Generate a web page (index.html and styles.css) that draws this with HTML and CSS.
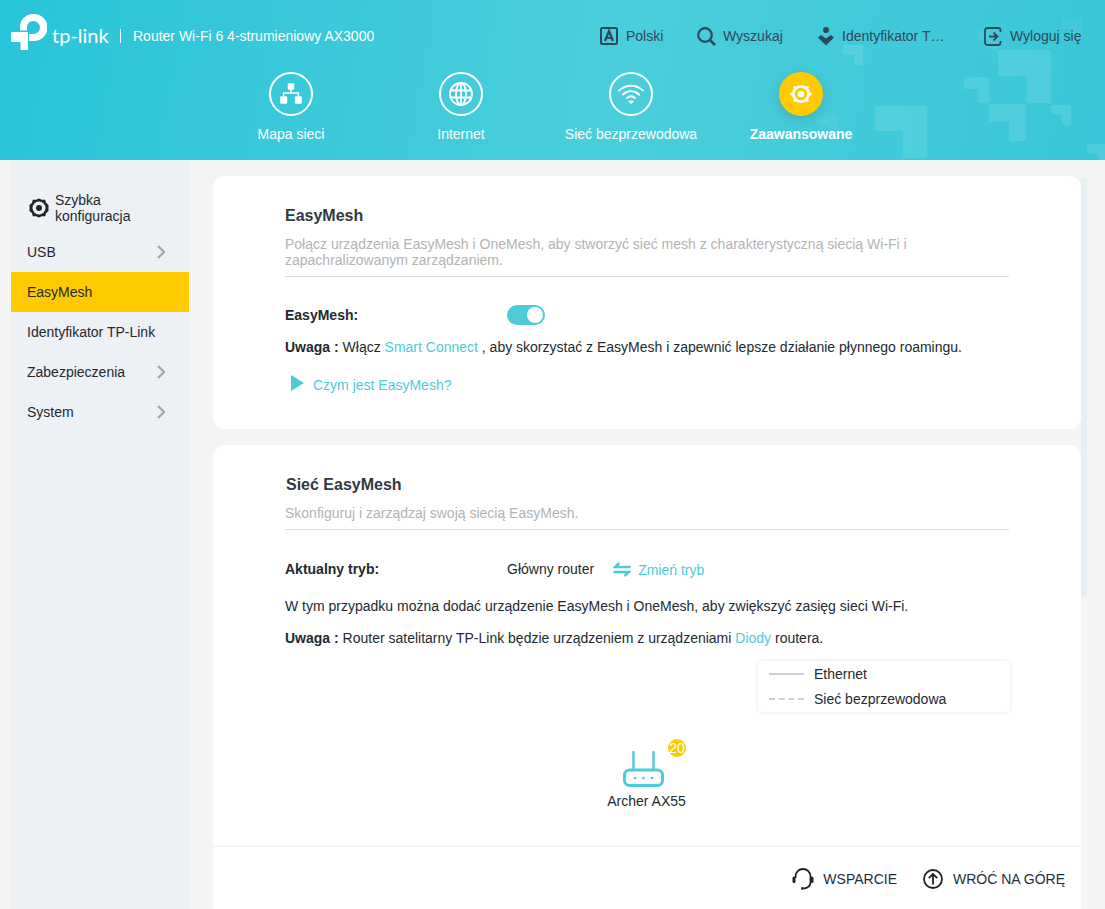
FILE: index.html
```html
<!DOCTYPE html>
<html lang="pl">
<head>
<meta charset="utf-8">
<title>Router Wi-Fi 6 AX3000</title>
<link rel="stylesheet" href="styles.css">
</head>
<body>
<header class="header">
  <svg class="deco" width="1105" height="160" viewBox="0 0 1105 160" aria-hidden="true">
    <path d="M875 106H927V158H903V131H875Z"/>
    <path d="M998 50H1051V103H1027V76H998Z"/>
    <path d="M989 104H1026V141H1009V122H989Z"/>
    <path d="M964 77H989V103H978V89H964Z"/>
    <path d="M843 45H863V65H854V55H843Z"/>
    <path class="faint" d="M1062 19H1082V39H1073V29H1062Z"/>
    <path d="M1051 105H1071V125H1062V114H1051Z"/>
    <path class="faint" d="M817 115H837V135H828V125H817Z"/>
    <path d="M1087 144H1107V164H1098V154H1087Z"/>
    <path class="faint" d="M978 30H998V50H989V40H978Z"/>
  </svg>
  <div class="topbar">
    <div class="brand">
      <svg class="logo-mark" width="36" height="36" viewBox="0 0 36 36" aria-hidden="true">
        <path fill="#fff" d="M9 16.500V13A13 13 0 0 1 22 0H23A13.500 13.500 0 0 1 23 27H18V20H22.500A6.500 6.500 0 0 0 22.500 7H22A6 6 0 0 0 16 13V16.500Z"/>
        <path fill="#fff" d="M0 18H17V36H9.500V28H0Z"/>
      </svg>
      <span class="logo-word">tp-link</span>
      <span class="brand-sep"></span>
      <span class="brand-title">Router Wi-Fi 6 4-strumieniowy AX3000</span>
    </div>
    <nav class="tools">
      <a class="tool tool-lang">
        <svg width="18" height="18" viewBox="0 0 18 18" fill="none" stroke="#2f4858" stroke-width="2" aria-hidden="true"><rect x="1" y="1" width="16" height="16" rx="1.500"/><path d="M5 14L9 4L13 14M6.300 11H11.700" stroke-width="2.200"/></svg>
        <span>Polski</span>
      </a>
      <a class="tool tool-search">
        <svg width="19" height="19" viewBox="0 0 19 19" fill="none" stroke="#2f4858" aria-hidden="true"><circle cx="8" cy="8" r="6.800" stroke-width="2.200"/><path d="M13 13L18 18" stroke-width="2.600"/></svg>
        <span>Wyszukaj</span>
      </a>
      <a class="tool tool-id">
        <svg width="16" height="19" viewBox="0 0 16 19" fill="#2f4858" aria-hidden="true"><circle cx="8" cy="3" r="3"/><path d="M0 10.500L3 8L8 11.500L13 8L16 10.500L8 18.500Z"/></svg>
        <span>Identyfikator T…</span>
      </a>
      <a class="tool tool-out">
        <svg width="18" height="19" viewBox="0 0 18 19" fill="none" stroke="#2f4858" stroke-width="1.800" aria-hidden="true"><path d="M16.500 5V3.500A2.500 2.500 0 0 0 14 1H3.500A2.500 2.500 0 0 0 1 3.500V15.500A2.500 2.500 0 0 0 3.500 18H14A2.500 2.500 0 0 0 16.500 15.500V14"/><path d="M5 9.500H13M9.500 5.500L13.500 9.500L9.500 13.500"/></svg>
        <span>Wyloguj się</span>
      </a>
    </nav>
  </div>
  <nav class="mainnav">
    <a class="navitem">
      <span class="navicon">
        <svg width="26" height="26" viewBox="0 0 24 24" fill="#fff" aria-hidden="true"><rect x="9" y="2" width="6" height="6" rx="1"/><rect x="2" y="14" width="6.500" height="7" rx="1"/><rect x="15.500" y="14" width="6.500" height="7" rx="1"/><path d="M11.300 7H12.700V10.300H19.500V14H18.100V11.700H5.900V14H4.500V10.300H11.300Z"/></svg>
      </span>
      <span class="navlabel">Mapa sieci</span>
    </a>
    <a class="navitem">
      <span class="navicon">
        <svg width="26" height="26" viewBox="0 0 26 26" fill="none" stroke="#fff" stroke-width="1.800" aria-hidden="true"><circle cx="13" cy="13" r="11"/><ellipse cx="13" cy="13" rx="5" ry="11"/><path d="M2.500 9.500H23.500M2.500 16.500H23.500M13 2V24"/></svg>
      </span>
      <span class="navlabel">Internet</span>
    </a>
    <a class="navitem">
      <span class="navicon">
        <svg width="28" height="24" viewBox="0 0 28 24" fill="none" stroke="#fff" stroke-width="2" stroke-linecap="round" aria-hidden="true"><path d="M2 8.500C9 2 19 2 26 8.500"/><path d="M6 12.500C11 8 17 8 22 12.500"/><path d="M10 16C12.500 14 15.500 14 18 16"/><path d="M14 21.500L11.800 19.200H16.200Z" fill="#fff" stroke-width="1"/></svg>
      </span>
      <span class="navlabel">Sieć bezprzewodowa</span>
    </a>
    <a class="navitem navitem-active">
      <span class="navicon">
        <svg width="24" height="24" viewBox="0 0 24 24" aria-hidden="true"><circle cx="12" cy="12" r="7.600" fill="none" stroke="#fff" stroke-width="2.600"/><circle cx="12" cy="12" r="3.300" fill="#fff"/><circle cx="5.800" cy="5.500" r="1.600" fill="#fff"/><circle cx="18.200" cy="5.500" r="1.600" fill="#fff"/><circle cx="5.800" cy="18.500" r="1.600" fill="#fff"/><circle cx="18.200" cy="18.500" r="1.600" fill="#fff"/><circle cx="2.800" cy="12" r="1.600" fill="#fff"/><circle cx="21.200" cy="12" r="1.600" fill="#fff"/></svg>
      </span>
      <span class="navlabel">Zaawansowane</span>
    </a>
  </nav>
</header>

<div class="body-wrap">
  <aside class="sidebar">
    <a class="quick">
      <svg width="20" height="20" viewBox="0 0 20 20" aria-hidden="true"><path d="M10 0.500L13 1.800L16.200 1.800L17 4.700L19.500 7L19.500 13L17 15.300L16.200 18.200L13 18.200L10 19.500L7 18.200L3.800 18.200L3 15.300L0.500 13L0.500 7L3 4.700L3.800 1.800L7 1.800Z" fill="#22262b"/><circle cx="10" cy="10" r="6.500" fill="#edf0f5"/><circle cx="10" cy="10" r="3" fill="#22262b"/></svg>
      <span>Szybka<br>konfiguracja</span>
    </a>
    <a class="side-item">USB<svg class="chev" width="8" height="14" viewBox="0 0 8 14" fill="none" stroke="#a4a9b0" stroke-width="2.400" aria-hidden="true"><path d="M1 1L7 7L1 13"/></svg></a>
    <a class="side-item side-active">EasyMesh</a>
    <a class="side-item">Identyfikator TP-Link</a>
    <a class="side-item">Zabezpieczenia<svg class="chev" width="8" height="14" viewBox="0 0 8 14" fill="none" stroke="#a4a9b0" stroke-width="2.400" aria-hidden="true"><path d="M1 1L7 7L1 13"/></svg></a>
    <a class="side-item">System<svg class="chev" width="8" height="14" viewBox="0 0 8 14" fill="none" stroke="#a4a9b0" stroke-width="2.400" aria-hidden="true"><path d="M1 1L7 7L1 13"/></svg></a>
  </aside>

  <main class="main">
    <div class="scroll-thumb"></div>
    <section class="card card-first">
      <h2 class="card-title">EasyMesh</h2>
      <p class="card-desc">Połącz urządzenia EasyMesh i OneMesh, aby stworzyć sieć mesh z charakterystyczną siecią Wi-Fi i zapachralizowanym zarządzaniem.</p>
      <div class="row row-toggle">
        <span class="row-label">EasyMesh:</span>
        <span class="toggle"><span class="knob"></span></span>
      </div>
      <p class="note note-a"><b>Uwaga :</b> Włącz <a class="link">Smart Connect</a> , aby skorzystać z EasyMesh i zapewnić lepsze działanie płynnego roamingu.</p>
      <a class="video link">
        <svg width="14" height="16" viewBox="0 0 14 16" aria-hidden="true"><path d="M1 0L14 8L1 16Z" fill="#4dcbd9"/></svg>
        <span>Czym jest EasyMesh?</span>
      </a>
    </section>

    <section class="card card-second">
      <h2 class="card-title card-title-2">Sieć EasyMesh</h2>
      <p class="card-desc">Skonfiguruj i zarządzaj swoją siecią EasyMesh.</p>
      <div class="row row-mode">
        <span class="row-label">Aktualny tryb:</span>
        <span>Główny router</span>
        <a class="switch link">
          <svg width="18" height="15" viewBox="0 0 18 15" fill="none" stroke="#4dcbd9" stroke-width="2.400" aria-hidden="true"><path d="M17.500 5H2L6.500 1"/><path d="M0.500 10H16L11.500 14"/></svg>
          <span>Zmień tryb</span>
        </a>
      </div>
      <p class="note note-b">W tym przypadku można dodać urządzenie EasyMesh i OneMesh, aby zwiększyć zasięg sieci Wi-Fi.</p>
      <p class="note note-c"><b>Uwaga :</b> Router satelitarny TP-Link będzie urządzeniem z urządzeniami <a class="link">Diody</a> routera.</p>
      <div class="legend-row">
        <div class="legend">
          <div class="legend-item"><span class="line line-solid"></span>Ethernet</div>
          <div class="legend-item"><span class="line line-dashed"></span>Sieć bezprzewodowa</div>
        </div>
      </div>
      <div class="device">
        <div class="device-icon">
          <svg width="42" height="36" viewBox="0 0 42 36" fill="none" stroke="#4dcbd9" aria-hidden="true"><path d="M10.500 0V18M30.500 0V18" stroke-width="2.400"/><rect x="1.500" y="19" width="38" height="15.500" rx="5" stroke-width="3"/><circle cx="12" cy="27" r="1.300" fill="#4dcbd9" stroke="none"/><circle cx="20.500" cy="27" r="1.300" fill="#4dcbd9" stroke="none"/><circle cx="29" cy="27" r="1.300" fill="#4dcbd9" stroke="none"/></svg>
          <span class="badge">20</span>
        </div>
        <div class="device-name">Archer AX55</div>
      </div>
      <footer class="foot">
        <a class="foot-item foot-support">
          <svg width="22" height="22" viewBox="0 0 22 22" fill="none" stroke="#222" aria-hidden="true"><path d="M3.500 10V8.500A7.500 7.500 0 0 1 18.500 8.500V14C18.500 17.500 16 20 12 20.500" stroke-width="1.800"/><rect x="0.500" y="8.500" width="3" height="6.500" rx="1.500" fill="#222" stroke="none"/><rect x="18.500" y="8.500" width="3" height="6.500" rx="1.500" fill="#222" stroke="none"/><circle cx="10.500" cy="20.500" r="1.400" fill="#222" stroke="none"/></svg>
          <span>WSPARCIE</span>
        </a>
        <a class="foot-item">
          <svg width="20" height="20" viewBox="0 0 20 20" fill="none" stroke="#222" stroke-width="1.800" aria-hidden="true"><circle cx="10" cy="10" r="9"/><path d="M10 15.500V5M5.800 9.200L10 5L14.200 9.200"/></svg>
          <span>WRÓĆ NA GÓRĘ</span>
        </a>
      </footer>
    </section>
  </main>
</div>
</body>
</html>
```
FILE: styles.css
```css
* { box-sizing: border-box; }
html, body { margin: 0; height: 909px; overflow: hidden; }
body {
  background: #f4f4f4;
  color: #222a30;
  font: 14px/16px "Liberation Sans", Arial, sans-serif;
}
p, h2 { margin: 0; }
a { color: inherit; text-decoration: none; }
svg { display: block; flex: none; }

/* Header */
.header {
  position: relative;
  height: 160px;
  overflow: hidden;
  background: linear-gradient(100deg, #28c4d9 0%, #4acedb 55%, #38c7d8 100%);
}
.deco { position: absolute; left: 0; top: 0; }
.deco path { fill: #fff; fill-opacity: .1; }
.deco .faint { fill-opacity: .05; }
.topbar {
  position: relative;
  display: flex;
  height: 72px;
  padding-left: 11px;
}
.brand { display: flex; align-items: center; height: 72px; width: 589px; }
.logo-mark { margin-top: -8px; }
.logo-word {
  width: 58px;
  margin: -3px 0 0 5px;
  color: #fff;
  font: 400 20px/24px Lato, sans-serif;
  white-space: nowrap;
}
.brand-sep { width: 1px; height: 14px; margin: 0 12px 0 10px; background: #fff; }
.brand-title { color: #fff; white-space: nowrap; }
.tools { display: flex; align-items: center; height: 72px; color: #2f4858; }
.tool { display: flex; align-items: center; gap: 8px; white-space: nowrap; }
.tool-lang { width: 97px; }
.tool-search { width: 121px; gap: 7px; }
.tool-id { width: 166px; }

.mainnav { position: relative; display: flex; padding-left: 206px; }
.navitem { display: flex; flex-direction: column; align-items: center; width: 170px; color: #fff; }
.navicon {
  display: flex;
  align-items: center;
  justify-content: center;
  width: 44px;
  height: 44px;
  border: 2px solid #fff;
  border-radius: 50%;
}
.navlabel { margin-top: 10px; line-height: 16px; white-space: nowrap; }
.navitem-active .navlabel { font-weight: 700; }
.navitem-active .navicon { background: #ffcb00; border-color: #ffcb00; box-shadow: 0 3px 10px rgba(90, 110, 110, .35); }

/* Layout */
.body-wrap { display: flex; height: 749px; padding-left: 11px; }
.sidebar { width: 178px; flex: none; padding-top: 32px; background: #edf0f5; }
.quick { display: flex; align-items: center; gap: 6px; height: 32px; margin-bottom: 8px; padding-left: 18px; }
.side-item {
  display: flex;
  align-items: center;
  justify-content: space-between;
  height: 40px;
  padding: 0 24px 0 16px;
}
.side-active { background: #ffcb00; }
.main { position: relative; width: 868px; margin-left: 24px; padding-top: 16px; }
.scroll-thumb {
  position: absolute;
  left: 868px;
  top: 18px;
  width: 6px;
  height: 419px;
  border-radius: 3px;
  background: #e8eff2;
}
.card {
  position: relative;
  background: #fff;
  border-radius: 12px;
  padding: 0 72px;
}
.card-first { height: 253px; padding-top: 31px; }
.card-second { height: 488px; margin-top: 16px; padding-top: 31px; border-radius: 12px 12px 0 0; }
.card-title { color: #2f3a42; font-size: 16px; line-height: 18px; font-weight: 700; }
.card-title-2 { padding-left: 1px; }
.card-desc {
  margin-top: 11px;
  padding-bottom: 8px;
  color: #b3b3b3;
  border-bottom: 1px solid #dcdcdc;
}
.row { display: flex; align-items: center; }
.row-label { width: 222px; font-weight: 700; }
.row-toggle { height: 20px; margin-top: 28px; }
.toggle { position: relative; display: block; width: 38px; height: 20px; border-radius: 10px; background: #4dcbd9; }
.knob { position: absolute; right: 2px; top: 2px; width: 16px; height: 16px; border-radius: 50%; background: #fff; }
.note-a { margin-top: 14px; }
.link { color: #4dcbd9; }
.video { display: flex; align-items: center; gap: 9px; margin: 22px 0 0 5px; }
.video svg { position: relative; top: -2px; }
.row-mode { height: 20px; margin-top: 29px; }
.switch { display: flex; align-items: center; gap: 7px; margin-left: 19px; }
.switch span { position: relative; top: 1px; }
.note-b { margin-top: 19px; }
.note-c { margin-top: 16px; }
.legend-row { display: flex; justify-content: flex-end; margin: 15px -1px 0 0; }
.legend {
  width: 252px;
  height: 51px;
  border-radius: 4px;
  background: #fff;
  box-shadow: 0 0 4px rgba(0, 0, 0, .1);
}
.legend-item { display: flex; align-items: center; height: 25px; padding-left: 11px; }
.line { display: block; width: 35px; margin-right: 10px; border-top: 2px solid #cfcfcf; }
.line-dashed { border-top-style: dashed; }
.device { display: flex; flex-direction: column; align-items: center; width: 723px; margin-top: 39px; }
.device-icon { position: relative; width: 42px; height: 36px; margin-right: 5px; }
.badge {
  position: absolute;
  left: 45px;
  top: -12px;
  width: 18px;
  height: 18px;
  border-radius: 50%;
  background: #ffcb00;
  color: #fff;
  text-align: center;
  line-height: 18px;
}
.device-name { margin-top: 6px; }
.foot {
  position: absolute;
  left: 0;
  right: 0;
  top: 400px;
  height: 88px;
  display: flex;
  justify-content: flex-end;
  gap: 26px;
  padding: 21px 16px 0 0;
  background: #fff;
  border-top: 2px solid #f4f4f4;
}
.foot-item { display: flex; align-items: center; gap: 10px; height: 22px; color: #1e2e3c; }
.foot-support { gap: 9px; }
```
